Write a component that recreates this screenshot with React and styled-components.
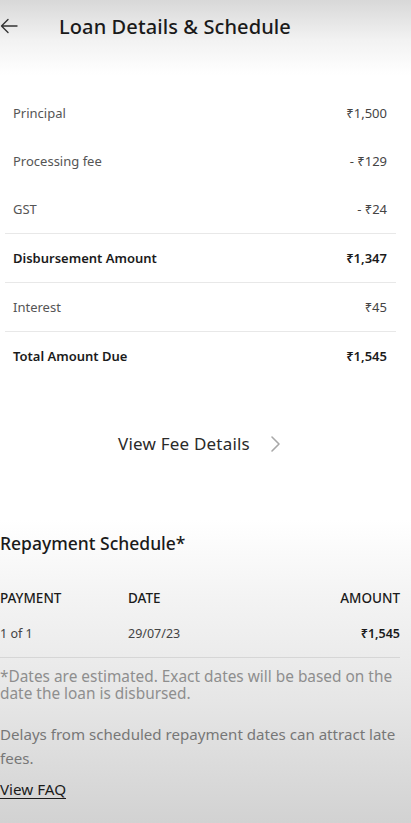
import React from 'react';
import styled, {createGlobalStyle} from 'styled-components';

const GlobalStyle = createGlobalStyle`
    html, body {
      margin: 0;
      padding: 0;
    }
    body {
      font-family: "Noto Sans", "Liberation Sans", sans-serif;
      color: #1b1b1b;
      background: #fff;
    }
`

const summary = [
    {label: 'Principal', value: '₹1,500'},
    {label: 'Processing fee', value: '- ₹129'},
    {label: 'GST', value: '- ₹24', line: true},
    {label: 'Disbursement Amount', value: '₹1,347', bold: true, line: true},
    {label: 'Interest', value: '₹45', line: true},
    {label: 'Total Amount Due', value: '₹1,545', bold: true},
];

export const App = () => {
    return <>
        <GlobalStyle/>
        <Wrap>
            <Header>
                <BackBtn>
                    <svg width="18" height="16" viewBox="0 0 18 16" fill="none" stroke="#333" strokeWidth="1.4" strokeLinecap="round" strokeLinejoin="round">
                        <path d="M17 8H1.5M8 1.5L1.5 8L8 14.5"/>
                    </svg>
                </BackBtn>
                <Title>Loan Details &amp; Schedule</Title>
            </Header>

            <Summary>
                {summary.map((row) => (
                    <Row key={row.label} line={row.line ? 1 : 0}>
                        <Label bold={row.bold ? 1 : 0}>{row.label}</Label>
                        <Value bold={row.bold ? 1 : 0}>{row.value}</Value>
                    </Row>
                ))}
            </Summary>

            <FeeLink>
                <span>View Fee Details</span>
                <svg width="11" height="18" viewBox="0 0 11 18" fill="none" stroke="#a8a8a8" strokeWidth="1.6" strokeLinecap="round" strokeLinejoin="round">
                    <path d="M2 2L9 9L2 16"/>
                </svg>
            </FeeLink>

            <Schedule>
                <SectionTitle>Repayment Schedule*</SectionTitle>
                <Table>
                    <HeadCell>PAYMENT</HeadCell>
                    <HeadCell>DATE</HeadCell>
                    <HeadCell right>AMOUNT</HeadCell>
                    <Cell>1 of 1</Cell>
                    <Cell>29/07/23</Cell>
                    <Cell right bold>₹1,545</Cell>
                </Table>
                <Note>*Dates are estimated. Exact dates will be based on the date the loan is disbursed.</Note>
                <Note spaced>Delays from scheduled repayment dates can attract late fees.</Note>
                <FaqLink>View FAQ</FaqLink>
            </Schedule>
        </Wrap>
    </>
}

export default App;

const Wrap = styled.div`
    min-height: 100vh;
    box-sizing: border-box;
    background: linear-gradient(180deg, #d8d8d8 0px, #f2f2f2 40px, #ffffff 75px, #ffffff 520px, #f3f3f3 600px, #e6e6e6 700px, #d2d2d2 823px);
`

const Header = styled.div`
    display: flex;
    align-items: center;
    height: 52px;
`

const BackBtn = styled.div`
    width: 59px;
    display: flex;
    align-items: center;
    svg { display: block; }
`

const Title = styled.div`
    font-size: 20px;
    font-weight: 500;
    color: #1a1a1a;
    letter-spacing: 0.1px;
`

const Summary = styled.div`
    margin-top: 37px;
    padding: 0 15px 0 5px;
`

const Row = styled.div`
    display: flex;
    justify-content: space-between;
    align-items: center;
    height: 48px;
    padding: 0 9px 0 8px;
    border-bottom: ${p => p.line ? '1px solid #e8e8e8' : 'none'};
`

const Label = styled.div`
    font-size: 13px;
    font-weight: ${p => p.bold ? 600 : 400};
    color: ${p => p.bold ? '#1b1b1b' : '#555'};
`

const Value = styled.div`
    font-size: 13px;
    font-weight: ${p => p.bold ? 600 : 400};
    color: ${p => p.bold ? '#1b1b1b' : '#444'};
`

const FeeLink = styled.div`
    display: flex;
    justify-content: center;
    align-items: center;
    gap: 20px;
    margin-top: 52px;
    padding-right: 12px;
    font-size: 17px;
    letter-spacing: 0.2px;
    color: #2a2a2a;
`

const Schedule = styled.div`
    margin-top: 76px;
    padding-right: 11px;
`

const SectionTitle = styled.div`
    font-size: 17.5px;
    font-weight: 500;
    color: #1a1a1a;
`

const Table = styled.div`
    display: grid;
    grid-template-columns: 128px 1fr auto;
    row-gap: 18px;
    margin-top: 34px;
    padding-bottom: 15px;
    border-bottom: 1px solid #d6d6d6;
`

const HeadCell = styled.div`
    font-size: 13.5px;
    font-weight: 500;
    color: #1b1b1b;
    text-align: ${p => p.right ? 'right' : 'left'};
`

const Cell = styled.div`
    font-size: 12.5px;
    font-weight: ${p => p.bold ? 600 : 400};
    color: ${p => p.bold ? '#1b1b1b' : '#444'};
    text-align: ${p => p.right ? 'right' : 'left'};
`

const Note = styled.p`
    margin: ${p => p.spaced ? '20px 0 0' : '10px 0 0'};
    font-size: ${p => p.spaced ? '15.1px' : '15.4px'};
    line-height: ${p => p.spaced ? '24px' : '17px'};
    color: ${p => p.spaced ? '#777' : '#8e8e8e'};
`

const FaqLink = styled.div`
    margin-top: 9px;
    font-size: 15.2px;
    color: #1b1b1b;
    text-decoration: underline;
    text-underline-offset: 3px;
`
